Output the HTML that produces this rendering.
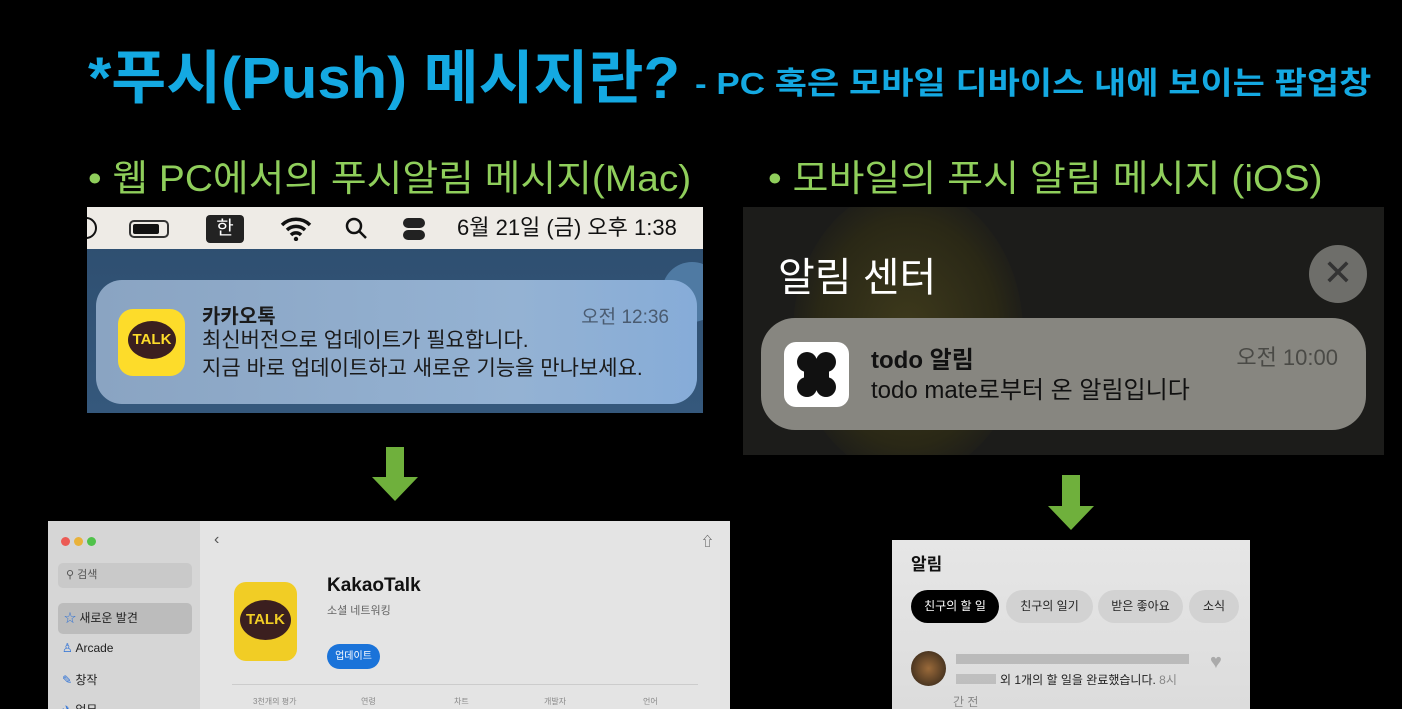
<!DOCTYPE html>
<html><head><meta charset="utf-8"><style>
*{margin:0;padding:0;box-sizing:border-box}
body{width:1402px;height:709px;background:#000;position:relative;overflow:hidden;font-family:"Liberation Sans","Noto Sans CJK KR",sans-serif}
.a{position:absolute;white-space:nowrap}
.t{color:#14a9e2;font-weight:bold}
.g{color:#8fce5b}
.sx{transform-origin:left top;display:inline-block}
</style></head><body>
<div class="a t" style="left:88px;top:44px;font-size:58px;line-height:70px"><span class="sx" style="transform:scaleX(1.03)">*푸시(Push) 메시지란?</span></div>
<div class="a t" style="left:695px;top:64px;font-size:31px;line-height:40px"><span class="sx" style="transform:scaleX(1.13)">- PC 혹은 모바일 디바이스 내에 보이는 팝업창</span></div>
<div class="a g" style="left:88px;top:156px;font-size:37px;line-height:46px"><span class="sx" style="transform:scaleX(1.05)">• 웹 PC에서의 푸시알림 메시지(Mac)</span></div>
<div class="a g" style="left:768px;top:156px;font-size:37px;line-height:46px"><span class="sx" style="transform:scaleX(1.056)">• 모바일의 푸시 알림 메시지 (iOS)</span></div>

<!-- Mac -->
<div class="a" style="left:87px;top:207px;width:616px;height:206px;background:linear-gradient(#2d4d6e,#35587c);overflow:hidden">
 <div class="a" style="left:0;top:0;width:616px;height:42px;background:#eeebe6;font-size:22px;color:#111">
  <div class="a" style="left:-12px;top:10px;width:22px;height:22px;border:2px solid #111;border-radius:50%"></div>
  <div class="a" style="left:42px;top:13px;width:40px;height:18px;border:2px solid #333;border-radius:5px"><div style="margin:2px;width:26px;height:10px;background:#111;border-radius:2px"></div></div>
  <div class="a" style="left:119px;top:8px;width:38px;height:28px;background:#222;border-radius:4px;color:#fff;font-size:19px;text-align:center;line-height:28px">한</div>
  <svg class="a" style="left:193px;top:10px" width="32" height="24" viewBox="0 0 32 24"><path d="M2 8a20 20 0 0 1 28 0M7 13a13 13 0 0 1 18 0M11 18a7 7 0 0 1 10 0" stroke="#111" stroke-width="3.5" fill="none"/><circle cx="16" cy="22" r="2.2" fill="#111"/></svg>
  <svg class="a" style="left:258px;top:10px" width="24" height="24"><circle cx="9" cy="9" r="7" stroke="#111" stroke-width="2.5" fill="none"/><path d="M14 14l7 7" stroke="#111" stroke-width="2.5"/></svg>
  <div class="a" style="left:316px;top:11px;width:22px;height:10px;background:#222;border-radius:5px"></div>
  <div class="a" style="left:316px;top:23px;width:22px;height:10px;background:#222;border-radius:5px"></div>
  <div class="a" style="left:370px;top:7px;line-height:28px">6월 21일 (금) 오후 1:38</div>
 </div>
 <div class="a" style="left:575px;top:55px;width:60px;height:60px;border-radius:50%;background:#4f7aa3"></div>
 <div class="a" style="left:9px;top:73px;width:601px;height:124px;border-radius:26px;background:linear-gradient(90deg,#8aa4c2,#94b2d3 70%,#86acd8)">
  <div class="a" style="left:22px;top:29px;width:67px;height:67px;border-radius:15px;background:#fddc2a">
   <div class="a" style="left:10px;top:12px;width:48px;height:38px;border-radius:50%;background:#3b1f1f;color:#fddc2a;font-size:15px;font-weight:bold;text-align:center;line-height:38px">TALK</div>
  </div>
  <div class="a" style="left:106px;top:20px;font-size:20px;font-weight:bold;color:#1a1a1a">카카오톡</div>
  <div class="a" style="left:106px;top:47px;font-size:21px;color:#1a1a1a;line-height:28px">최신버전으로 업데이트가 필요합니다.<br>지금 바로 업데이트하고 새로운 기능을 만나보세요.</div>
  <div class="a" style="right:28px;top:22px;font-size:19px;color:#4a5b70">오전 12:36</div>
 </div>
</div>

<!-- iOS -->
<div class="a" style="left:743px;top:207px;width:641px;height:248px;background:#1c1c1a;overflow:hidden">
 <div class="a" style="left:50px;top:-20px;width:230px;height:290px;border-radius:50%;background:radial-gradient(ellipse at 50% 50%,#3e3a1c,#2a2816 55%,#1c1c1a 75%)"></div>
 <div class="a" style="left:35px;top:38px;font-size:40px;color:#fff">알림 센터</div>
 <div class="a" style="left:566px;top:38px;width:58px;height:58px;border-radius:50%;background:#6e6e6a;color:#333;font-size:36px;text-align:center;line-height:56px">✕</div>
 <div class="a" style="left:18px;top:111px;width:605px;height:112px;border-radius:34px;background:#878680">
  <div class="a" style="left:23px;top:24px;width:65px;height:65px;border-radius:12px;background:#fff">
   <svg width="65" height="65"><g fill="#111"><circle cx="23" cy="20" r="10"/><circle cx="42" cy="20" r="10"/><circle cx="23" cy="45" r="10"/><circle cx="42" cy="45" r="10"/><rect x="20" y="18" width="25" height="29"/></g></svg>
  </div>
  <div class="a" style="left:110px;top:22px;font-size:24px;font-weight:bold;color:#111">todo 알림</div>
  <div class="a" style="left:110px;top:52px;font-size:24px;color:#111">todo mate로부터 온 알림입니다</div>
  <div class="a" style="right:28px;top:22px;font-size:22px;color:#4a4a46">오전 10:00</div>
 </div>
</div>

<!-- arrows -->
<svg class="a" style="left:372px;top:447px" width="46" height="54"><path d="M14 0h18v30h14L23 54 0 30h14z" fill="#6fb03c"/></svg>
<svg class="a" style="left:1048px;top:475px" width="46" height="55"><path d="M14 0h18v31h14L23 55 0 31h14z" fill="#6fb03c"/></svg>

<!-- App store -->
<div class="a" style="left:48px;top:521px;width:682px;height:188px;background:#e4e4e4;overflow:hidden">
 <div class="a" style="left:0;top:0;width:152px;height:188px;background:#d6d6d6">
  <div class="a" style="left:13px;top:16px;width:9px;height:9px;border-radius:50%;background:#ec5b55"></div>
  <div class="a" style="left:26px;top:16px;width:9px;height:9px;border-radius:50%;background:#e9b23a"></div>
  <div class="a" style="left:39px;top:16px;width:9px;height:9px;border-radius:50%;background:#50c24a"></div>
  <div class="a" style="left:10px;top:42px;width:134px;height:25px;border-radius:5px;background:#c9c9c9;font-size:11px;color:#555;line-height:25px;padding-left:8px">⚲ 검색</div>
  <div class="a" style="left:10px;top:82px;width:134px;height:31px;border-radius:5px;background:#bcbcbc;font-size:12px;color:#222;line-height:31px;padding-left:6px"><span style="color:#2a6fd6">☆</span> 새로운 발견</div>
  <div class="a" style="left:14px;top:120px;font-size:12px;color:#222"><span style="color:#2a6fd6">♙</span> Arcade</div>
  <div class="a" style="left:14px;top:150px;font-size:12px;color:#222"><span style="color:#2a6fd6">✎</span> 창작</div>
  <div class="a" style="left:14px;top:180px;font-size:12px;color:#222"><span style="color:#2a6fd6">✈</span> 업무</div>
 </div>
 <div class="a" style="left:166px;top:10px;font-size:16px;color:#555">‹</div>
 <div class="a" style="left:653px;top:10px;font-size:13px;color:#555">⇧</div>
 <div class="a" style="left:186px;top:61px;width:63px;height:79px;border-radius:12px;background:#f1cd25">
  <div class="a" style="left:6px;top:18px;width:51px;height:40px;border-radius:50%;background:#3b1f1f;color:#f1cd25;font-size:15px;font-weight:bold;text-align:center;line-height:40px">TALK</div>
 </div>
 <div class="a" style="left:279px;top:54px;font-size:19px;font-weight:bold;color:#111">KakaoTalk</div>
 <div class="a" style="left:279px;top:81px;font-size:11px;color:#666">소셜 네트워킹</div>
 <div class="a" style="left:279px;top:123px;width:53px;height:25px;border-radius:13px;background:#1a73d9;color:#fff;font-size:10px;text-align:center;line-height:25px">업데이트</div>
 <div class="a" style="left:184px;top:163px;width:466px;height:1px;background:#ccc"></div>
 <div class="a" style="left:205px;top:175px;font-size:8px;color:#888">3천개의 평가</div>
 <div class="a" style="left:313px;top:175px;font-size:8px;color:#888">연령</div>
 <div class="a" style="left:406px;top:175px;font-size:8px;color:#888">차트</div>
 <div class="a" style="left:496px;top:175px;font-size:8px;color:#888">개발자</div>
 <div class="a" style="left:595px;top:175px;font-size:8px;color:#888">언어</div>
</div>

<!-- todo -->
<div class="a" style="left:892px;top:540px;width:358px;height:169px;background:linear-gradient(#e6e6e6,#dcdcdc);overflow:hidden">
 <div class="a" style="left:19px;top:10px;font-size:17px;font-weight:bold;color:#111">알림</div>
 <div class="a" style="left:19px;top:50px;width:88px;height:33px;border-radius:17px;background:#000;color:#fff;font-size:12px;text-align:center;line-height:33px">친구의 할 일</div>
 <div class="a" style="left:114px;top:50px;width:87px;height:33px;border-radius:17px;background:#d2d2d2;color:#222;font-size:12px;text-align:center;line-height:33px">친구의 일기</div>
 <div class="a" style="left:206px;top:50px;width:85px;height:33px;border-radius:17px;background:#d2d2d2;color:#222;font-size:12px;text-align:center;line-height:33px">받은 좋아요</div>
 <div class="a" style="left:297px;top:50px;width:50px;height:33px;border-radius:17px;background:#d2d2d2;color:#222;font-size:12px;text-align:center;line-height:33px">소식</div>
 <div class="a" style="left:19px;top:111px;width:35px;height:35px;border-radius:50%;background:radial-gradient(#9a6a3a,#2a2016)"></div>
 <div class="a" style="left:64px;top:114px;width:233px;height:10px;background:#aaa;opacity:.7"></div>
 <div class="a" style="left:64px;top:134px;width:40px;height:10px;background:#aaa;opacity:.6"></div>
 <div class="a" style="left:108px;top:131px;font-size:12px;color:#222">외 1개의 할 일을 완료했습니다. <span style="color:#888">8시</span></div>
 <div class="a" style="left:61px;top:153px;font-size:12px;color:#888">간 전</div>
 <div class="a" style="left:318px;top:111px;font-size:20px;color:#aaa">♥</div>
</div>
</body></html>
